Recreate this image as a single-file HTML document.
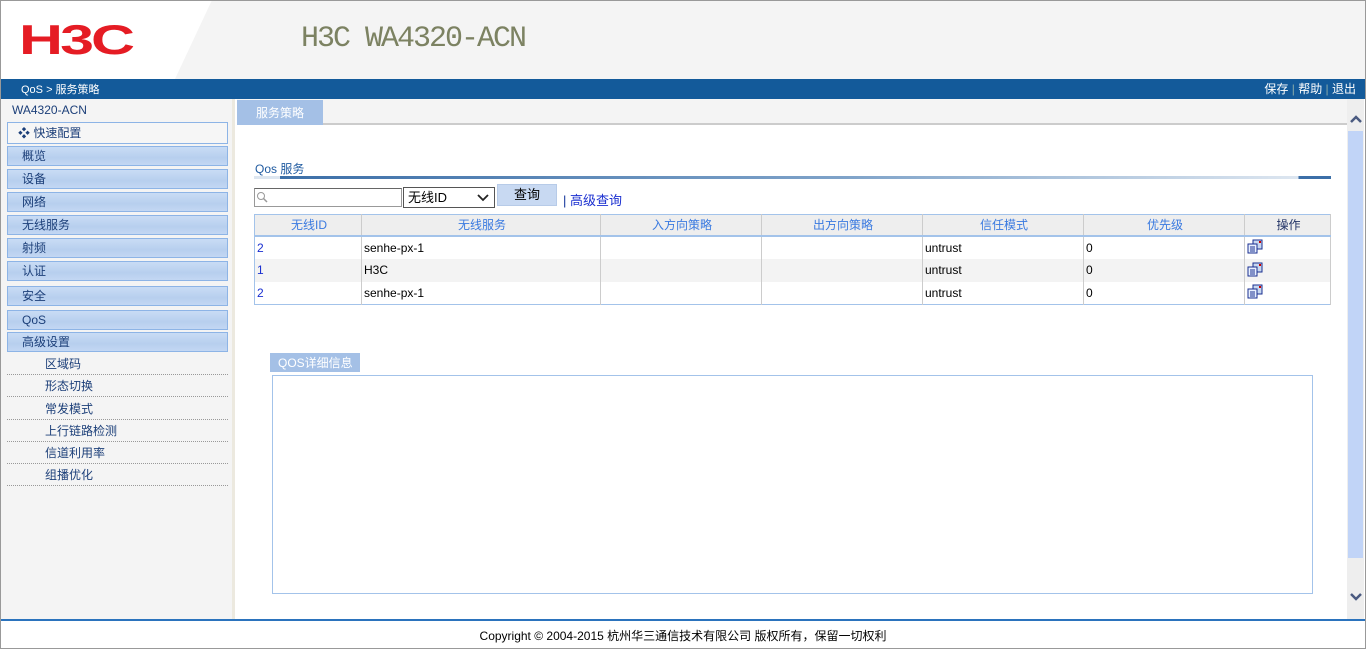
<!DOCTYPE html>
<html><head><meta charset="utf-8"><style>
*{margin:0;padding:0;box-sizing:border-box}
body{width:1366px;height:649px;overflow:hidden;font-family:"Liberation Sans","Noto Sans CJK SC",sans-serif;font-size:12px;background:#fff;position:relative}
.a{position:absolute}
.menu{position:absolute;left:7px;width:221px;height:20px;border:1px solid #8db4e6;background:linear-gradient(#c9dcf5,#b7cfee 60%,#c3d7f3);color:#1c3f79;font-size:12px;line-height:19px;padding-left:14px}
.sub{position:absolute;left:7px;width:221px;height:22px;border-bottom:1px dotted #999;color:#1c3f79;padding-left:38px;line-height:22px}
table{border-collapse:collapse;position:absolute;left:254px;top:214px;width:1077px;border:1px solid #a3c3ea}
td,th{height:23px;border-right:1px solid #ccc;font-weight:normal;font-size:12px;padding-left:2px;text-align:left}
th{background:#eeeeee;color:#3a7ae0;text-align:center;height:21px;border-bottom:2px solid #a3c3ea}
tr.g td{background:#f3f3f3}
td.id{color:#1a2fd0}
</style></head><body>
<div class="a" style="left:0;top:0;width:1366px;height:79px;background:#fff"></div>
<svg class="a" style="left:0;top:0" width="1366" height="79"><polygon points="212,0 1366,0 1366,79 175,79" fill="#f4f4f4"/></svg>
<div class="a" style="left:19px;top:21px;font:bold 42px 'Liberation Sans',sans-serif;color:#e51c24;letter-spacing:-2px;transform:scaleX(1.45);transform-origin:left;line-height:38px">H3C</div>
<div class="a" style="left:301px;top:22px;font:30px 'Liberation Mono',monospace;color:#7c8262;letter-spacing:-2px">H3C WA4320-ACN</div>
<div class="a" style="left:0;top:79px;width:1366px;height:20px;background:#135a9a;color:#fff;line-height:22px"><span style="position:absolute;left:21px;font-size:11px">QoS &gt; 服务策略</span><span style="position:absolute;right:10px;top:-1px;font-size:12px">保存 <span style="color:#8aa">|</span> 帮助 <span style="color:#8aa">|</span> 退出</span></div>
<div class="a" style="left:0;top:99px;width:235px;height:521px;background:#f4f4f4;border-right:3px solid #ece9df"></div>
<div class="a" style="left:12px;top:103px;color:#1c3f79;font-size:12px">WA4320-ACN</div>
<div class="a" style="left:7px;top:122px;width:221px;height:22px;border:1px solid #8db4e6;background:#f6f6f6;color:#1c3f79;line-height:20px;padding-left:10px">❖ 快速配置</div>
<div class="menu" style="top:146px">概览</div>
<div class="menu" style="top:169px">设备</div>
<div class="menu" style="top:192px">网络</div>
<div class="menu" style="top:215px">无线服务</div>
<div class="menu" style="top:238px">射频</div>
<div class="menu" style="top:261px">认证</div>
<div class="menu" style="top:286px">安全</div>
<div class="menu" style="top:310px">QoS</div>
<div class="menu" style="top:332px">高级设置</div>
<div class="sub" style="top:353px">区域码</div>
<div class="sub" style="top:375px">形态切换</div>
<div class="sub" style="top:398px">常发模式</div>
<div class="sub" style="top:420px">上行链路检测</div>
<div class="sub" style="top:442px">信道利用率</div>
<div class="sub" style="top:464px">组播优化</div>
<div class="a" style="left:237px;top:99px;width:1110px;height:26px;background:#f4f4f4;border-bottom:2px solid #ccc"></div>
<div class="a" style="left:237px;top:100px;width:86px;height:25px;background:#a4c0e6;color:#fff;text-align:center;line-height:27px">服务策略</div>
<div class="a" style="left:1347px;top:99px;width:17px;height:521px;background:#eee"></div>
<div class="a" style="left:1348px;top:131px;width:15px;height:427px;background:#c1d4f7"></div>
<svg class="a" style="left:1349px;top:114px" width="14" height="10"><path d="M2 8L7 3L12 8" stroke="#4a5a80" stroke-width="2.5" fill="none"/></svg>
<svg class="a" style="left:1349px;top:592px" width="14" height="10"><path d="M2 2L7 7L12 2" stroke="#4a5a80" stroke-width="2.5" fill="none"/></svg>
<div class="a" style="left:255px;top:160px;color:#1f5aa0;font-size:12px">Qos 服务</div>
<div class="a" style="left:254px;top:176px;width:1077px;height:3px;background:linear-gradient(90deg,#dde6f0 0,#dde6f0 26px,#3c6fa8 26px,#7fa3c9 55%,#dde6f0 97%,#3c6fa8 97%)"></div>
<div class="a" style="left:254px;top:188px;width:148px;height:19px;border:1px solid #999;border-top-color:#666;background:#fff"><svg style="position:absolute;left:1px;top:2px" width="12" height="13"><circle cx="5" cy="5" r="3.5" stroke="#999" fill="none"/><path d="M7.5 7.5L11 11" stroke="#999" stroke-width="1.5"/></svg></div>
<div class="a" style="left:403px;top:187px;width:92px;height:21px;border:1px solid #555;background:#fff;font-size:13px;line-height:19px;padding-left:4px">无线ID<svg style="position:absolute;right:5px;top:6px" width="12" height="8"><path d="M1 1L6 6L11 1" stroke="#222" stroke-width="1.8" fill="none"/></svg></div>
<div class="a" style="left:497px;top:184px;width:60px;height:22px;background:#c8d9f2;border:1px solid #b7cbe8;text-align:center;line-height:20px;font-size:13px">查询</div>
<div class="a" style="left:563px;top:190px;font-size:13px;color:#113399">| <span style="color:#1a2fd0">高级查询</span></div>
<table>
<tr><th style="width:107px">无线ID</th><th style="width:239px">无线服务</th><th style="width:161px">入方向策略</th><th style="width:161px">出方向策略</th><th style="width:161px">信任模式</th><th style="width:161px">优先级</th><th style="color:#223366">操作</th></tr>
<tr><td class="id">2</td><td>senhe-px-1</td><td></td><td></td><td>untrust</td><td>0</td><td><svg width="18" height="16"><path d="M6 2h9v9h-9z" fill="#c8d8f0" stroke="#1a2f90"/><path d="M12 3h2v2h-2z" fill="#c00"/><path d="M1 6h9v9h-9z" fill="#e8f0ff" stroke="#1a2f90"/><path d="M3 9h5M3 11h5M3 13h5" stroke="#1a2f90"/></svg></td></tr>
<tr class="g"><td class="id">1</td><td>H3C</td><td></td><td></td><td>untrust</td><td>0</td><td><svg width="18" height="16"><path d="M6 2h9v9h-9z" fill="#c8d8f0" stroke="#1a2f90"/><path d="M12 3h2v2h-2z" fill="#c00"/><path d="M1 6h9v9h-9z" fill="#e8f0ff" stroke="#1a2f90"/><path d="M3 9h5M3 11h5M3 13h5" stroke="#1a2f90"/></svg></td></tr>
<tr><td class="id">2</td><td>senhe-px-1</td><td></td><td></td><td>untrust</td><td>0</td><td><svg width="18" height="16"><path d="M6 2h9v9h-9z" fill="#c8d8f0" stroke="#1a2f90"/><path d="M12 3h2v2h-2z" fill="#c00"/><path d="M1 6h9v9h-9z" fill="#e8f0ff" stroke="#1a2f90"/><path d="M3 9h5M3 11h5M3 13h5" stroke="#1a2f90"/></svg></td></tr>
</table>
<div class="a" style="left:270px;top:353px;width:90px;height:19px;background:#a4c0e6;color:#fff;line-height:20px;padding-left:8px">QOS详细信息</div>
<div class="a" style="left:272px;top:375px;width:1041px;height:219px;border:1px solid #a3c3ea"></div>
<div class="a" style="left:0;top:619px;width:1366px;height:2px;background:#2b73bd"></div>
<div class="a" style="left:0;top:627px;width:1366px;text-align:center;font-size:12px;color:#000">Copyright © 2004-2015 杭州华三通信技术有限公司 版权所有，保留一切权利</div>
<div class="a" style="left:0;top:0;width:1366px;height:649px;border:1px solid #999;pointer-events:none"></div>
</body></html>
